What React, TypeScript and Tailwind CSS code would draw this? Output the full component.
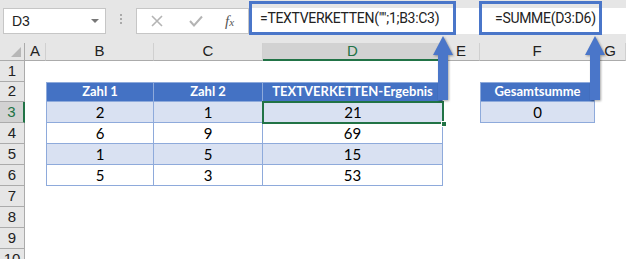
const cols = [
  { key: "A", w: 21 },
  { key: "B", w: 108 },
  { key: "C", w: 109 },
  { key: "D", w: 180 },
  { key: "E", w: 37 },
  { key: "F", w: 115 },
  { key: "G", w: 31 },
];

const data = [
  ["2", "1", "21"],
  ["6", "9", "69"],
  ["1", "5", "15"],
  ["5", "3", "53"],
];

const rowHeights = [21, 20, 21, 21, 21, 21, 21, 21, 21, 21];

const Arrow = ({ left }: { left: number }) => (
  <svg
    className="absolute top-[36px] drop-shadow-[1px_1px_1px_rgba(0,0,0,0.35)]"
    style={{ left }}
    width="22"
    height="65"
    viewBox="0 0 22 65"
  >
    <path d="M11 0 L21 19 L16 19 L16 64 L6 64 L6 19 L1 19 Z" fill="#4a76c9" />
  </svg>
);

function Cell({ row, col }: { row: number; col: string }) {
  const base = "flex items-center justify-center whitespace-nowrap text-black";
  const tb = "border-[#8eaadb]";
  // table 1: B2:D6, table 2: F2:F3
  const inT1 = row >= 2 && row <= 6 && (col === "B" || col === "C" || col === "D");
  const inT2 = (row === 2 || row === 3) && col === "F";
  if (!inT1 && !inT2) return <div className="bg-white" />;
  const header = row === 2;
  const band = row === 3 || row === 5;
  const edgeL = col === "B" || col === "F";
  let text = "";
  if (header) {
    text = col === "B" ? "Zahl 1" : col === "C" ? "Zahl 2" : col === "D" ? "TEXTVERKETTEN-Ergebnis" : "Gesamtsumme";
  } else if (inT2) {
    text = "0";
  } else {
    text = data[row - 3]["BCD".indexOf(col)];
  }
  return (
    <div
      className={`${base} ${tb} border-r border-b ${edgeL ? "border-l" : ""} ${header ? "border-t bg-[#4472c4] text-[13px] font-bold text-white" : band ? "bg-[#d9e1f2] text-[15px]" : "bg-white text-[15px]"}`}
    >
      {text}
    </div>
  );
}

export default function App() {
  return (
    <div className="relative h-[259px] w-[626px] overflow-hidden bg-white font-['Lato',sans-serif]">
      {/* formula bar */}
      <div className="flex h-[43px] items-start bg-[#e6e6e6] pt-[8px] font-['Liberation_Sans',sans-serif]">
        <div className="ml-[3px] flex h-[26px] w-[103px] items-center justify-between border border-[#c6c6c6] bg-white pl-[8px] pr-[6px] text-[14px] text-[#222]">
          D3
          <span className="h-0 w-0 border-x-[4px] border-t-[4px] border-x-transparent border-t-[#777]" />
        </div>
        <div className="flex w-[30px] flex-col items-center gap-[2px] pt-[6px]">
          <span className="h-[2px] w-[2px] bg-[#aaa]" />
          <span className="h-[2px] w-[2px] bg-[#aaa]" />
          <span className="h-[2px] w-[2px] bg-[#aaa]" />
        </div>
        <div className="flex h-[26px] w-[113px] items-center border border-[#c6c6c6] bg-white pl-[13px] text-[#b8b8b8]">
          <svg width="14" height="14" viewBox="0 0 14 14">
            <path d="M2 2 L12 12 M12 2 L2 12" stroke="#b4b4b4" strokeWidth="1.6" />
          </svg>
          <svg className="ml-[24px]" width="16" height="14" viewBox="0 0 16 14">
            <path d="M2 7 L6 11.5 L14 2.5" stroke="#b4b4b4" strokeWidth="2" fill="none" />
          </svg>
          <span className="ml-[21px] font-['Liberation_Serif',serif] text-[15px] italic text-[#555]">
            f<span className="text-[11px]">x</span>
          </span>
        </div>
        <div className="flex h-[26px] flex-1 items-center bg-white font-['Roboto',sans-serif] text-[14px] tracking-[-0.3px] text-[#222]">
          <div className="-mt-[6px] flex h-[34px] w-[207px] items-center border-[3px] border-[#4a76c9] pl-[8px]">
            =TEXTVERKETTEN("";1;B3:C3)
          </div>
          <div className="ml-[23px] -mt-[6px] flex h-[34px] w-[123px] items-center border-[3px] border-[#4a76c9] pl-[13px]">
            =SUMME(D3:D6)
          </div>
        </div>
      </div>

      {/* sheet */}
      <div
        className="grid"
        style={{
          gridTemplateColumns: `25px ${cols.map((c) => c.w + "px").join(" ")}`,
          gridTemplateRows: `18px ${rowHeights.map((h) => h + "px").join(" ")}`,
        }}
      >
        <div className="relative border-r border-b border-[#ababab] bg-[#e6e6e6]">
          <span className="absolute bottom-[3px] right-[3px] h-0 w-0 border-b-[10px] border-l-[10px] border-l-transparent border-b-[#b7b7b7]" />
        </div>
        {cols.map((c) => (
          <div
            key={c.key}
            className={`flex items-center justify-center font-['Liberation_Sans',sans-serif] text-[15px] ${
              c.key === "D"
                ? "border-r border-b-2 border-r-[#c6c6c6] border-b-[#217346] bg-[#d2d2d2] text-[#217346]"
                : "border-r border-b border-r-[#d0d0d0] border-b-[#ababab] bg-[#e6e6e6] text-[#222]"
            }`}
          >
            {c.key}
          </div>
        ))}
        {rowHeights.map((_, i) => {
          const row = i + 1;
          return [
            <div
              key={`h${row}`}
              className={`flex items-center justify-center border-b border-b-[#ababab] font-['Liberation_Sans',sans-serif] text-[15px] ${
                row === 3
                  ? "border-r-2 border-r-[#217346] bg-[#d2d2d2] text-[#217346]"
                  : "border-r border-r-[#ababab] bg-[#e6e6e6] text-[#222]"
              }`}
            >
              {row}
            </div>,
            ...cols.map((c) =>
              row === 3 && c.key === "D" ? (
                <div key={`${row}${c.key}`} className="relative">
                  <div className="absolute -inset-[1px] flex items-center justify-center border-2 border-[#217346] bg-[#d9e1f2] text-[15px]">
                    21
                  </div>
                  <span className="absolute -bottom-[4px] -right-[4px] h-[6px] w-[6px] border border-white bg-[#217346]" />
                </div>
              ) : (
                <Cell key={`${row}${c.key}`} row={row} col={c.key} />
              )
            ),
          ];
        })}
      </div>

      <Arrow left={432} />
      <Arrow left={584} />
    </div>
  );
}
